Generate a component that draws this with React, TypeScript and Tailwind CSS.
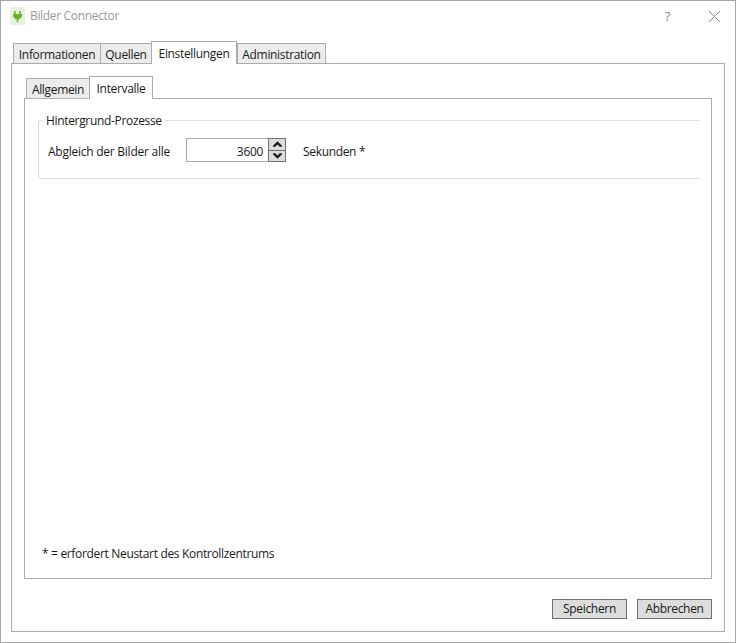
import { useState } from 'react';

const outerTabs = ['Informationen', 'Quellen', 'Einstellungen', 'Administration'];
const innerTabs = ['Allgemein', 'Intervalle'];
const tabWidths = { outer: [88, 52, 86, 89], inner: [64, 64] };

function Tab({ label, active, width }: { label: string; active: boolean; width: number }) {
  return (
    <div
      style={{ width }}
      className={
        active
          ? 'relative z-10 h-[23px] border border-b-0 border-[#acacac] bg-white flex justify-center pt-[4px] text-[#1a1a1a]'
          : 'h-[20px] mb-px border border-b-0 border-[#acacac] bg-[#ececec] flex justify-center pt-[3px] -mr-px last:mr-0 text-[#1a1a1a]'
      }
    >
      {label}
    </div>
  );
}

export default function App() {
  const [seconds] = useState(3600);

  return (
    <div className="w-[736px] h-[643px] bg-white border border-[#a6a6a6] flex flex-col font-['Open_Sans','Noto_Sans',sans-serif] text-[12px] leading-[16px] tracking-[-0.33px] text-[#1a1a1a] overflow-hidden">
      {/* Title bar */}
      <div className="h-[40px] shrink-0 flex items-start pl-[9px] pr-[15px] pt-[6px]">
        <div className="w-[15px] h-[18px] bg-[#e9f3dc] flex items-center justify-center">
          <svg width="11" height="13" viewBox="0 0 11 13">
            <path d="M3 1v3M8 1v3" stroke="#6fb02c" strokeWidth="1.6" fill="none" />
            <path d="M1 4h9v2.5L7.5 9.2H3.5L1 6.5z" fill="#6fb02c" />
            <path d="M5.5 9v3" stroke="#6fb02c" strokeWidth="1.6" />
          </svg>
        </div>
        <span className="ml-[5px] pt-px text-[#9a9a9a] text-[12px]">Bilder Connector</span>
        <span className="ml-auto mr-[39px] pt-px text-[#8a8a8a] text-[13px]">?</span>
        <svg width="11" height="11" viewBox="0 0 11 11" className="mt-[4px]">
          <path d="M0 0l11 11M11 0L0 11" stroke="#8a8a8a" strokeWidth="1" />
        </svg>
      </div>

      {/* Main tab control */}
      <div className="flex-1 flex flex-col pl-[10px] pr-[10px] pb-[10px] min-h-0">
        <div className="flex items-end h-[23px] pl-[2px] -mb-px">
          {outerTabs.map((t, i) => (
            <Tab key={t} label={t} active={t === 'Einstellungen'} width={tabWidths.outer[i]} />
          ))}
        </div>
        <div className="flex-1 border border-[#acacac] flex flex-col min-h-0">
          <div className="flex-1 flex flex-col pt-[12px] pl-[12px] pr-[12px] min-h-0">
            <div className="flex items-end h-[23px] pl-[2px] -mb-px">
              {innerTabs.map((t, i) => (
                <Tab key={t} label={t} active={t === 'Intervalle'} width={tabWidths.inner[i]} />
              ))}
            </div>
            <div className="flex-1 border border-[#acacac] flex flex-col pl-[13px] pr-[12px] pt-[21px] pb-[16px] min-h-0">
              {/* Group box */}
              <div className="relative h-[59px] border border-r-0 border-[#d5dfe5] rounded-l-[3px] flex items-start pl-[9px] pt-[17px]">
                <span className="absolute left-[4px] -top-[8px] bg-white px-[3px]">Hintergrund-Prozesse</span>
                <span className="pt-[6px] w-[138px] tracking-[-0.25px]">Abgleich der Bilder alle</span>
                <div className="w-[100px] h-[24px] border border-[#acacac] flex">
                  <div className="flex-1 text-right pr-[5px] pt-[5px]">{seconds}</div>
                  <div className="w-[18px] flex flex-col border border-[#707070] -mr-px -my-px">
                    <div className="flex-1 flex items-center justify-center border-b border-[#707070] bg-[#dddddd]">
                      <svg width="9" height="6" viewBox="0 0 10 6"><path d="M5 0l5 5v1H7.5L5 3.5 2.5 6H0V5z" fill="#1a1a1a" /></svg>
                    </div>
                    <div className="flex-1 flex items-center justify-center bg-[#dddddd]">
                      <svg width="9" height="6" viewBox="0 0 10 6"><path d="M5 6L0 1V0h2.5L5 2.5 7.5 0H10v1z" fill="#1a1a1a" /></svg>
                    </div>
                  </div>
                </div>
                <span className="pt-[6px] ml-[17px]">Sekunden *</span>
              </div>
              <div className="mt-auto pl-[4px]">* = erfordert Neustart des Kontrollzentrums</div>
            </div>
          </div>
          {/* Buttons */}
          <div className="h-[52px] shrink-0 flex justify-end items-start pt-[20px] pr-[12px] gap-[10px]">
            <button className="w-[75px] h-[20px] border border-[#707070] bg-[#dddddd] flex items-center justify-center">Speichern</button>
            <button className="w-[75px] h-[20px] border border-[#707070] bg-[#dddddd] flex items-center justify-center">Abbrechen</button>
          </div>
        </div>
      </div>
    </div>
  );
}
